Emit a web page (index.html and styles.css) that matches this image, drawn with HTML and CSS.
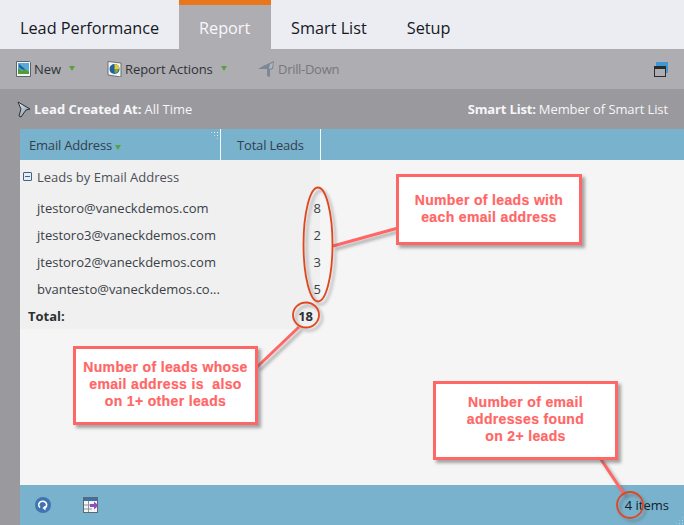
FILE: index.html
```html
<!DOCTYPE html>
<html lang="en">
<head>
    <meta charset="UTF-8">
    <meta name="viewport" content="width=device-width, initial-scale=1.0">
    <title>Lead Performance Report</title>
    <link rel="stylesheet" href="styles.css">
</head>
<body>
    <div class="tabs">
        <div class="tab tab-first">Lead Performance</div>
        <div class="tab active">Report</div>
        <div class="tab">Smart List</div>
        <div class="tab">Setup</div>
    </div>
    <div class="toolbar">
        <div class="tool tool-new">
            <svg class="icon" width="16" height="16" viewBox="0 0 16 16">
                <path d="M0.500 0.500h13l1 1v14h-14z" fill="#f4f6f6" stroke="#59646c"/>
                <rect x="2" y="2" width="11" height="11" fill="#5aa9d6"/>
                <path d="M2 7l4 3 3-2 4 3v2H2z" fill="#4f9e3a"/>
                <path d="M3 3l6 5-1 1-3-1-2-2z" fill="#1f5f9a"/>
            </svg>
            <span>New</span>
            <i class="caret"></i>
        </div>
        <div class="tool tool-actions">
            <svg class="icon" width="16" height="16" viewBox="0 0 16 16">
                <path d="M1 0.500l13 1.500v14l-13-2z" fill="#f2f4f5" stroke="#5f666b" stroke-width="0.900"/>
                <circle cx="7.500" cy="8" r="5" fill="#1f5f9f"/>
                <path d="M7.500 8V3a5 5 0 0 1 5 5z" fill="#e8c92f"/>
                <path d="M7.500 8h4a4 4 0 0 1-4 4z" fill="#7cab3a"/>
            </svg>
            <span>Report Actions</span>
            <i class="caret"></i>
        </div>
        <div class="tool tool-drill">
            <svg class="icon" width="20" height="16" viewBox="0 0 20 16">
                <path d="M16 0l-1 8-3 1v7l-3-1V8H0l5-3z" fill="#7d8893"/>
                <path d="M15 2l-1 5-3 1 1-5z" fill="#a8b8c6"/>
            </svg>
            <span>Drill-Down</span>
        </div>
        <svg class="window-icon" width="14" height="15" viewBox="0 0 14 15">
            <rect x="2" y="0" width="12" height="11" fill="#3f97d6"/>
            <rect x="0.500" y="4.500" width="11" height="10" fill="#aeadb2" stroke="#2b2b2e"/>
            <rect x="0" y="4" width="12" height="3" fill="#2b2b2e"/>
        </svg>
    </div>
    <div class="filters">
        <div class="filter">
            <svg class="funnel" width="15" height="17" viewBox="0 0 15 17">
                <defs>
                    <linearGradient id="funnelFill" x1="0" y1="0" x2="1" y2="1">
                        <stop offset="0" stop-color="#f2f4f6"/>
                        <stop offset="1" stop-color="#6f8296"/>
                    </linearGradient>
                </defs>
                <path d="M2 1l12 7-4 1-5 7-2-1 2-7z" fill="url(#funnelFill)" stroke="#26303a" stroke-width="1"/>
            </svg>
            <b>Lead Created At:</b> All Time
        </div>
        <div class="filter filter-right"><b>Smart List:</b> <span>Member of Smart List</span></div>
    </div>
    <div class="main">
        <div class="grid-head">
            <div class="col col-email">Email Address<i class="caret caret-small"></i><span class="grip"></span></div>
            <div class="col col-total">Total Leads</div>
        </div>
        <div class="grid-body">
            <div class="pivot">
                <div class="group"><span class="minus"></span>Leads by Email Address</div>
                <div class="row"><span>jtestoro@vaneckdemos.com</span><span>8</span></div>
                <div class="row"><span>jtestoro3@vaneckdemos.com</span><span>2</span></div>
                <div class="row"><span>jtestoro2@vaneckdemos.com</span><span>3</span></div>
                <div class="row"><span>bvantesto@vaneckdemos.co...</span><span>5</span></div>
                <div class="total"><span>Total:</span><span>18</span></div>
            </div>
        </div>
        <div class="grid-foot">
            <svg width="16" height="16" viewBox="0 0 16 16">
                <circle cx="8" cy="8" r="8" fill="#3f74b3"/>
                <path d="M5 10.500A4 3.600 0 1 1 9.500 11" fill="none" stroke="#fff" stroke-width="1.600"/>
                <path d="M10.500 8.500v5l-3-2.500z" fill="#fff"/>
            </svg>
            <svg class="export" width="16" height="16" viewBox="0 0 16 16">
                <rect x="0.500" y="0.500" width="14" height="15" fill="#f4f5f6" stroke="#5f6870"/>
                <rect x="1" y="1" width="14" height="3" fill="#3d6fa8"/>
                <path d="M5.500 4v11M1 8h8M1 12h8" stroke="#8d959c"/>
                <path d="M7 7h4V4.500L15.500 8.500 11 12.500V10H7z" fill="#8e4fb5"/>
            </svg>
            <span class="count">4 items</span>
            <span class="grip grip-foot"></span>
        </div>
    </div>

    <svg class="marks" width="684" height="525" viewBox="0 0 684 525">
        <defs>
            <filter id="soft" x="-30%" y="-30%" width="160%" height="160%">
                <feDropShadow dx="3" dy="3" stdDeviation="1.500" flood-color="#555" flood-opacity="0.450"/>
            </filter>
        </defs>
        <g filter="url(#soft)">
            <line x1="333" y1="246" x2="398" y2="228" stroke="#ff6666" stroke-width="3"/>
            <line x1="299" y1="327" x2="257" y2="367" stroke="#ff6666" stroke-width="3"/>
            <line x1="600" y1="458" x2="624" y2="494" stroke="#ff6666" stroke-width="3"/>
        </g>
        <g fill="none" stroke="#e0461c" stroke-width="1.800" filter="url(#soft)">
            <ellipse cx="318" cy="244.500" rx="14.500" ry="57"/>
            <ellipse cx="306" cy="315" rx="13" ry="12.500"/>
            <ellipse cx="630" cy="505" rx="13" ry="13"/>
        </g>
    </svg>

    <div class="note note-email">Number of leads with<br>each email address</div>
    <div class="note note-total">Number of leads whose<br>email address is&nbsp; also<br>on 1+ other leads</div>
    <div class="note note-items">Number of email<br>addresses found<br>on 2+ leads</div>
</body>
</html>
```
FILE: styles.css
```css
html, body {
    margin: 0;
    padding: 0;
}
body {
    width: 684px;
    height: 525px;
    overflow: hidden;
    position: relative;
    display: flex;
    flex-direction: column;
    font-family: 'Open Sans', sans-serif;
    font-size: 13px;
    color: #3a3f47;
    background: #9a999e;
}
.tabs {
    display: flex;
    height: 49px;
    background: #ecedf2;
    color: #14181f;
    font-size: 16.250px;
}
.tab {
    padding: 0 20px;
    line-height: 56px;
    white-space: nowrap;
}
.tab-first {
    width: 139px;
}
.tab.active {
    width: 52px;
    height: 44px;
    background: #aeadb2;
    border-top: 5px solid #e8761a;
    line-height: 46px;
    color: #f8f8fa;
}
.toolbar {
    height: 40px;
    background: #aeadb2;
    display: flex;
    align-items: center;
    padding: 0 16px;
    color: #2f3338;
    letter-spacing: -0.080px;
}
.tool {
    display: flex;
    align-items: center;
}
.tool .icon {
    margin-right: 2px;
}
.tool-new {
    width: 91px;
}
.tool-actions {
    width: 151px;
}
.tool-drill {
    color: #77777c;
    letter-spacing: -0.300px;
}
.tool-drill .icon {
    margin-right: 0;
}
.caret {
    display: inline-block;
    width: 0;
    height: 0;
    margin-left: 8px;
    margin-bottom: 1px;
    border-left: 3.500px solid transparent;
    border-right: 3.500px solid transparent;
    border-top: 5px solid #56a33e;
}
.caret-small {
    margin-left: 3px;
    margin-bottom: 0;
    vertical-align: 0;
}
.window-icon {
    margin-left: auto;
}
.filters {
    height: 40px;
    display: flex;
    justify-content: space-between;
    align-items: center;
    padding: 0 16px;
    color: #f6f6f8;
}
.filter {
    display: flex;
    align-items: center;
    gap: 3px;
}
.funnel {
    margin-right: 0;
}
.filter-right span {
    letter-spacing: -0.100px;
}
.filter-right b {
    letter-spacing: -0.150px;
}
.main {
    flex: 1;
    margin-left: 20px;
    display: flex;
    flex-direction: column;
    background: #f5f5f5;
}
.grid-head {
    height: 31px;
    background: #79b2cd;
    display: flex;
    color: #33404c;
    line-height: 32px;
    letter-spacing: -0.200px;
}
.col {
    position: relative;
    border-right: 1px solid #f4f8fa;
    box-sizing: border-box;
}
.col-email {
    width: 201px;
    padding-left: 9px;
}
.col-total {
    width: 100px;
    text-align: center;
}
.grip {
    position: absolute;
    top: 2px;
    right: 1px;
    width: 9px;
    height: 9px;
    background-image: radial-gradient(#fff 1px, transparent 1px);
    background-size: 3px 3px;
    clip-path: polygon(0 0, 100% 0, 100% 100%);
}
.grid-body {
    flex: 1;
}
.pivot {
    width: 300px;
    height: 169px;
    background: #f0f0f0;
}
.group {
    box-sizing: border-box;
    height: 35px;
    padding: 0 0 2px 3px;
    display: flex;
    align-items: center;
    color: #4c5158;
}
.minus {
    box-sizing: border-box;
    width: 9px;
    height: 9px;
    margin-right: 5px;
    border: 1px solid #3f6287;
    border-radius: 1px;
    background: linear-gradient(#3f6287, #3f6287) center / 5px 1px no-repeat #e6edf3;
}
.row, .total {
    display: flex;
    justify-content: space-between;
    height: 27px;
    line-height: 27px;
}
.row {
    padding-left: 17px;
    margin-right: -1px;
}
.total {
    padding: 0 7px 0 8px;
    font-weight: 700;
    color: #2c3036;
}
.grid-foot {
    height: 40px;
    background: #79b2cd;
    position: relative;
    display: flex;
    align-items: center;
    padding: 0 15px;
    color: #14202b;
}
.export {
    margin-left: 32px;
}
.count {
    margin-left: auto;
}
.grip-foot {
    top: auto;
    bottom: 0;
    right: 0;
    background-image: radial-gradient(#b9d8e6 1px, transparent 1px);
    clip-path: polygon(100% 0, 100% 100%, 0 100%);
}

/* annotations pasted on top of the screenshot */
.marks {
    position: absolute;
    left: 0;
    top: 0;
}
.note {
    position: absolute;
    box-sizing: border-box;
    display: flex;
    align-items: center;
    justify-content: center;
    text-align: center;
    background: #fff;
    border: 3px solid #ff6666;
    box-shadow: 3px 3px 3px rgba(85, 85, 85, 0.5);
    color: #ff6666;
    font-family: 'Liberation Sans', Arial, sans-serif;
    font-weight: 700;
    font-size: 14px;
    line-height: 17px;
    letter-spacing: 0.350px;
    -webkit-text-stroke: 0.2px #ff6666;
}
.note-email {
    left: 396px;
    top: 174px;
    width: 186px;
    height: 71px;
    padding-bottom: 1px;
}
.note-total {
    left: 73px;
    top: 346px;
    width: 185px;
    height: 79px;
    padding-bottom: 2px;
}
.note-items {
    left: 433px;
    top: 381px;
    width: 185px;
    height: 79px;
    padding-bottom: 2px;
}
```
